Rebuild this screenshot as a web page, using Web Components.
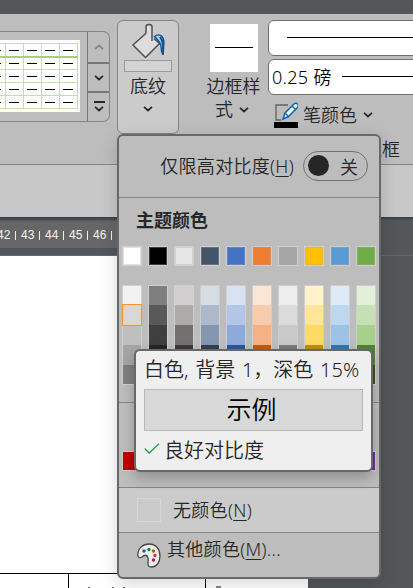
<!DOCTYPE html>
<html lang="zh-CN">
<head>
<meta charset="utf-8">
<title>底纹</title>
<style>
html,body{margin:0;height:588px;overflow:hidden;font-family:"Noto Sans","Noto Sans CJK SC",sans-serif;font-size:18px;font-weight:350;color:#262626}
</style>
</head>
<body>
<shading-app></shading-app>
<script>
const define=(name,html,setup)=>customElements.define(name,class extends HTMLElement{
  constructor(){super();this.attachShadow({mode:'open'}).innerHTML=html;}
  connectedCallback(){if(setup)setup(this,this.shadowRoot);}
});

define('chevron-icon',`<style>:host{display:block;width:10px;height:6px}svg{display:block}</style>
<svg width="10" height="6" viewBox="0 0 10 6"><path d="M1 .9 5 4.500 9 .9" fill="none" stroke="currentColor" stroke-width="1.7"/></svg>`);

define('table-gallery',`<style>
:host{display:flex;width:109px;height:89px;margin-top:17px;border:1px solid #858585;border-left:0;border-radius:0 7px 7px 0;box-sizing:content-box;overflow:hidden}
.preview{flex:0 0 80px;height:72px;margin-top:8px;background:#fff}
.buttons{flex:0 0 22px;margin-left:7px;display:flex;flex-direction:column;border-left:1px solid #777}
.buttons div{flex:0 0 32px;display:flex;flex-direction:column;align-items:center;justify-content:center;gap:3px;border-bottom:2px solid #777;box-sizing:border-box}
.buttons div:nth-child(2){flex-basis:29px}.buttons div:last-child{flex:1;border:0;padding-bottom:2px}
.buttons div:first-child{color:#858585}.up{transform:scaleY(-1)}.bar{width:11px;height:2px;background:#262626}
chevron-icon{width:10px}
svg{display:block}
</style><div class="preview"><svg width="80" height="72"><g id="g"></g></svg></div>
<div class="buttons"><div><chevron-icon class="up"></chevron-icon></div><div><chevron-icon></chevron-icon></div><div><span class="bar"></span><chevron-icon></chevron-icon></div></div>`,
(h,r)=>{
  let s='';
  for(const y of [3.5,29.5,42.5,55.5,68.5])s+=`<path d="M0 ${y}H78" stroke="#c3deb0"/>`;
  for(const x of [5.5,23.5,41.5,59.5,77.5])s+=`<path d="M${x} 3V69" stroke="#c3deb0"/>`;
  s+='<path d="M0 17H78" stroke="#a4cf83" stroke-width="2"/>';
  for(const y of [10.5,23.5,36.5,49.5,62.5]){s+=`<path d="M0 ${y}H1M9 ${y}h10M27 ${y}h10M45 ${y}h10M63 ${y}h10" stroke="#000"/>`;}
  r.querySelector('#g').innerHTML=s;
});

define('shading-button',`<style>
:host{display:flex;flex-direction:column;align-items:center;width:60px;height:112px;margin:6px 0 0 7px;border:1px solid #858585;border-radius:6px;background:#cbcbcb}
svg{display:block;margin-top:2px;flex:none}.swatch{width:46px;height:10px;border:1px solid #999;background:#d3d3d3;margin-top:1px}
.label{line-height:24px;height:24px;margin-top:2px;margin-bottom:8px}
</style><svg width="48" height="36" viewBox="0 0 48 36"><path d="M24.500 8 9 22 21.500 34.500 35.500 20.500 30 15.500" fill="#ddd" stroke="#505050" stroke-width="1.500"/><path d="M22 10.500V4Q22 1.500 25 1.500T28 4V18" fill="#ddd" stroke="#505050" stroke-width="1.500"/><path d="M30.500 13.500Q34 10.500 37.500 13Q41 16 39.500 24L39 32L37.500 28Q37 20 34.500 18Z" fill="#9ecdf0" stroke="#0e5191" stroke-width="1.400"/><path d="M36 14Q40 18 39 31" fill="none" stroke="#0e5191" stroke-width="2"/></svg>
<div class="swatch"></div><div class="label">底纹</div><chevron-icon></chevron-icon>`);

define('border-style',`<style>
:host{display:block;width:64px;margin:10px 0 0 10px;text-align:center;line-height:24px}
.box{width:48px;height:48px;margin:0 auto 2px 10px;background:#fff;display:grid;place-items:center}.box i{width:38px;height:1px;background:#000;margin-top:-1px}
.second{display:flex;align-items:center;justify-content:center;gap:6px;margin-top:-1px}chevron-icon{margin-top:2px}
.label{white-space:nowrap;margin-left:2px;margin-right:-1px}
</style><div class="box"><i></i></div><div class="label">边框样</div><div class="second"><span>式</span><chevron-icon></chevron-icon></div>`);

define('pen-controls',`<style>
:host{display:block;width:145px;margin-top:6px;margin-left:4px;flex:none}
.field{height:34px;border:1px solid #707070;border-radius:6px;background:#fff;margin-bottom:3px;display:flex;align-items:center;color:#000;width:160px}
.field i{height:1px;background:#000;flex:1;margin-left:18px;margin-top:-1px}.field span{font-size:18px;margin-left:3px;white-space:nowrap;line-height:30px;letter-spacing:.3px}.field span+i{margin-left:10px;margin-top:-1px}
.pen{display:flex;align-items:center;height:32px;padding-left:6px;padding-top:1px;white-space:nowrap}.pen span{margin-left:5px;margin-right:6px;line-height:24px;margin-top:-1px}
svg{flex:none;margin-top:-1px}
</style><div class="field"><i></i></div><div class="field"><span>0.25 磅</span><i></i></div>
<div class="pen"><svg width="24" height="26" viewBox="0 0 24 26"><path d="M14 3H2v15h5" fill="none" stroke="#606060" stroke-width="1.300"/><path d="m9 17 2-6 9-9q2-1.500 3.500 0t0 3.500l-9 9Z" fill="#e9f4fc" stroke="#1265ad" stroke-width="1.500"/><path d="m18 4 4 4M11 11l4 4" stroke="#1265ad" stroke-width="1.300"/><path d="M0 20h24v6H0z"/></svg><span>笔颜色</span><chevron-icon></chevron-icon></div>`);

define('ribbon-bar',`<style>
:host{display:block;height:217px;background:#c8c8c8}
.title{height:14px;background:#53575a}.tools{height:150px;background:#bdbdbd;border-bottom:1px solid #858585;display:flex;align-items:flex-start;position:relative;overflow:hidden}
table-gallery,shading-button,border-style{flex:none}
.rule{width:1px;height:130px;margin:6px 0 0 11px;background:#929292}
.group{position:absolute;right:13px;top:123px;line-height:24px}
</style><div class="title"></div><div class="tools"><table-gallery></table-gallery><shading-button></shading-button><div class="rule"></div><border-style></border-style><pen-controls></pen-controls><span class="group">边框</span></div>`);

define('document-area',`<style>
:host{display:block;height:371px;background:#53575a;position:relative;overflow:hidden}
.shade{height:4px;background:linear-gradient(#373b42,#555b62)}
.ruler{width:309px;height:27px;background:#666;color:#f2f2f2;font:400 12px/28px "Liberation Sans",sans-serif;display:flex;overflow:hidden}
.ruler span{width:24px;flex:none;white-space:nowrap;display:flex;align-items:center;gap:5px;padding-top:1px}.ruler i{width:1px;height:9px;background:#eee}
.ruler span:first-child{margin-left:-3px}
.gap{height:7px;background:#4f565e;width:309px}.line{height:1px;background:#66696c}
.page{width:308px;height:332px;background:#fff;border-right:1px solid #555}
.row{box-sizing:border-box;border-top:1px solid #000;height:15px;display:flex}
.spacer{height:317px}.row div{border-right:1px solid #000;width:136px;flex:none}.row div:first-child{width:68px}
.cell{display:flex;align-items:flex-end}.cell i{width:2px;height:1px;background:#666}
.cell i:nth-child(1){margin-left:19px}.cell i:nth-child(2){margin-left:22px}.cell i:nth-child(3){margin-left:9px}
.last{display:flex;align-items:flex-end;margin-left:10px}.last i{width:5px;height:2px;background:#888}
</style><div class="shade"></div><div class="ruler"></div><div class="gap"></div><div class="line"></div><div class="page"><div class="spacer"></div><div class="row"><div></div><div class="cell"><i></i><i></i><i></i></div><span class="last"><i></i></span></div></div>`,
(h,r)=>{
  r.querySelector('.ruler').innerHTML=[42,43,44,45,46].map(n=>`<span>${n}<i></i></span>`).join('');
});

define('toggle-switch',`<style>
:host{display:flex;box-sizing:border-box;width:65px;height:30px;border:1px solid #727272;border-radius:15px;align-items:center;padding-left:4px}
.dot{width:21px;height:21px;border-radius:50%;background:#262626;margin-right:11px;margin-top:-1px}
</style><div class="dot"></div><slot></slot>`);

define('color-grid',`<style>
:host{display:block;padding-left:3px}
.row{display:grid;grid-template-columns:repeat(10,20px);column-gap:6px}
.c{box-sizing:border-box;height:20px;border:1px solid #cecece;box-shadow:inset 0 0 0 1px rgba(170,170,170,.35)}
.tints{margin-top:19px}.tints .col{border:1px solid #cecece;height:100px;box-sizing:border-box}.col div{height:20px}.col div:first-child,.col div:last-child{height:19px}
.col .selected{box-sizing:border-box;outline:1px solid #f7942f;box-shadow:inset 0 0 0 1px #f6d391}
</style><div class="row main"></div><div class="row tints"></div>`,
(h,r)=>{
 const main=['#fff','#000','#e7e6e6','#44546a','#4472c4','#ed7d31','#a5a5a5','#ffc000','#5b9bd5','#70ad47'];
 const tints=['f2f2f2 d8d8d8 bfbfbf a5a5a5 7f7f7f','7f7f7f 595959 3f3f3f 262626 0c0c0c','d0cece aeabab 757070 3a3838 171616','d6dce4 adb9ca 8496b0 323f4f 222a35','d9e2f3 b4c6e7 8eaadb 2f5496 1f3864','fbe5d5 f7cbac f4b183 c55a11 833c0b','ededed dbdbdb c9c9c9 7b7b7b 525252','fff2cc fee599 ffd965 bf9000 7f6000','deebf6 bdd7ee 9cc3e5 2e75b5 1e4e79','e2efd9 c5e0b3 a8d08d 538135 375623'];
 r.querySelector('.main').innerHTML=main.map(c=>`<div class="c" style="background:${c}"></div>`).join('');
 r.querySelector('.tints').innerHTML=tints.map((t,i)=>`<div class="col">${t.split(' ').map((c,j)=>`<div${i==0&&j==1?' class="selected"':''} style="background:#${c}"></div>`).join('')}</div>`).join('');
});

define('color-menu',`<style>
:host{position:absolute;left:117px;top:134px;width:264px;height:445px;box-sizing:border-box;border:2px solid #686868;border-radius:6px;background:#bdbdbd;box-shadow:0 5px 18px rgba(0,0,0,.16);overflow:hidden;white-space:nowrap}
u{text-decoration-thickness:1px;text-underline-offset:3px}
.contrast{height:62px;box-sizing:border-box;display:flex;align-items:center;justify-content:flex-end;padding-right:11px;gap:9px;border-bottom:1px solid #858585}
.contrast span{letter-spacing:.3px;margin-top:-4px}toggle-switch{margin-top:-1px}
h2{font-size:18px;font-weight:700;line-height:24px;height:24px;margin:10px 0 14px 17px}
.standard{margin-top:17px;border-top:1px solid #858585;height:85px;box-sizing:border-box;padding:48px 3px 0;display:grid;grid-template-columns:repeat(10,20px);column-gap:6px}
.standard i{height:20px;box-sizing:border-box;border:1px solid #cecece}
.none{height:46px;box-sizing:border-box;background:#cbcbcb;border:solid #858585;border-width:1px 0;display:flex;align-items:center;padding-left:18px;gap:12px}
.none i{width:22px;height:22px;border:1px solid #d6d6d6}.none span{margin-top:-2px;letter-spacing:.3px}
.more{height:43px;display:flex;align-items:flex-start;padding:4px 0 0 18px;gap:6px;line-height:24px;letter-spacing:.3px}.more svg{margin-top:6px;flex:none}
</style><div class="contrast"><span>仅限高对比度(<u>H</u>)</span><toggle-switch>关</toggle-switch></div><h2>主题颜色</h2><color-grid></color-grid><div class="standard"></div><div class="none"><i></i><span>无颜色(<u>N</u>)</span></div><div class="more"><svg width="24" height="25" viewBox="0 0 24 25"><path d="M.8 12C1 5 6 1 12 1c7 0 11 5 11 12 0 6-3 11-9 11-5 0-2-6-3-9-1-4-4-3-6-1-2 1-4.300 1-4.200-2Z" fill="#eee" stroke="#464646" stroke-width="1.300"/><circle cx="7" cy="8" r="1.700" fill="#0762aa"/><circle cx="12" cy="6.500" r="1.700" fill="#178435"/><circle cx="16.500" cy="8" r="1.700" fill="#a66900"/><circle cx="18" cy="12.500" r="1.700" fill="#d13e3e"/><circle cx="16.500" cy="17" r="1.700" fill="#b20e70"/></svg><span>其他颜色(<u>M</u>)...</span></div>`,
(h,r)=>{r.querySelector('.standard').innerHTML=['#c00000','#ff0000','#ffc000','#ffff00','#92d050','#00b050','#00b0f0','#0070c0','#002060','#7030a0'].map(c=>`<i style="background:${c}"></i>`).join('');});

define('color-tooltip',`<style>
:host{position:absolute;left:134px;top:349px;width:239px;height:123px;box-sizing:border-box;border:2px solid #686868;border-radius:6px;background:#efefef;padding:4px 8px 0;box-shadow:0 6px 14px rgba(0,0,0,.24);white-space:nowrap}
.name{height:28px;line-height:29px;font-size:20px;word-spacing:1.500px}
.sample{height:42px;box-sizing:border-box;border:1px solid #b8b8b8;background:#d8d8d8;display:grid;place-items:center;font-size:25px;line-height:36px;color:#000;margin-top:6px;width:219px;padding:0 4px 2px 0}
.good{display:flex;align-items:center;gap:4px;height:36px;font-size:20px}
</style><div class="name">白色, 背景 1，深色 15%</div><div class="sample">示例</div><div class="good"><svg width="16" height="12" viewBox="0 0 16 12"><path d="m.7 5.500 4.500 4.500L15 .7" fill="none" stroke="#2e9a50" stroke-width="1.300"/></svg><span>良好对比度</span></div>`);

define('shading-app',`<style>:host{display:block;width:413px;height:588px;position:relative;overflow:hidden}</style><ribbon-bar></ribbon-bar><document-area></document-area><color-menu></color-menu><color-tooltip></color-tooltip>`);
</script>
</body>
</html>
